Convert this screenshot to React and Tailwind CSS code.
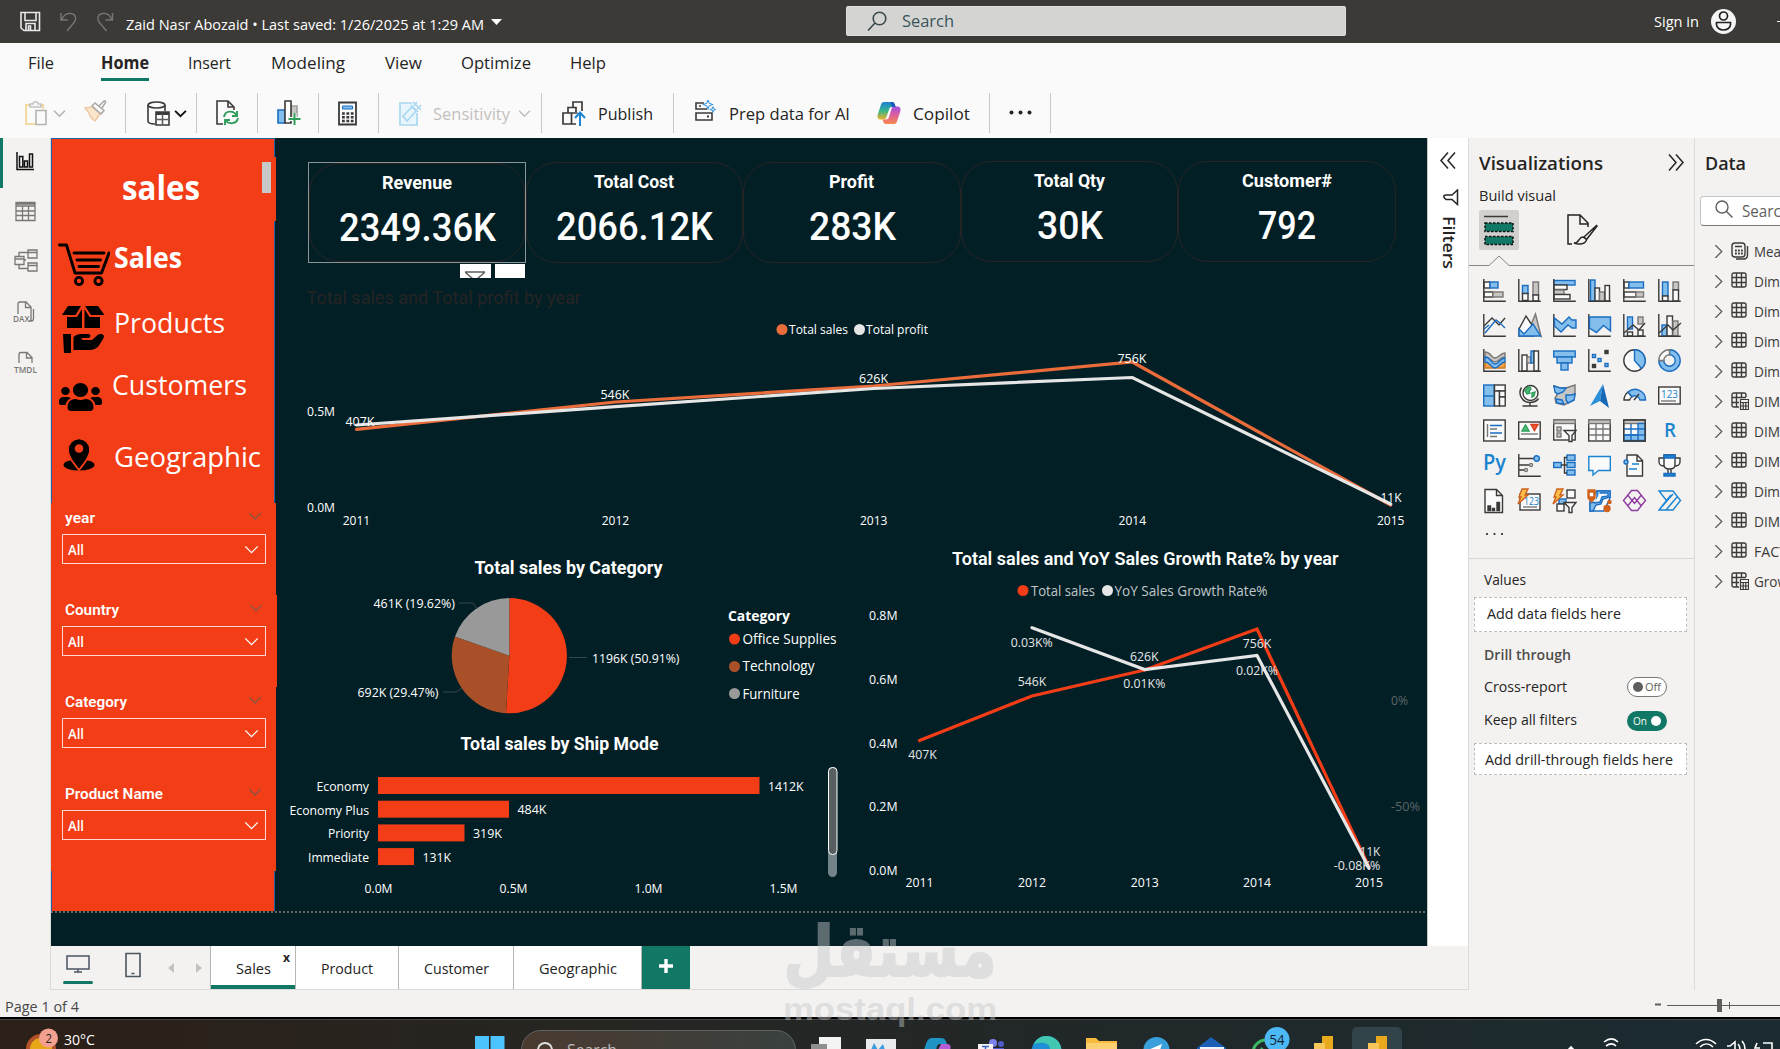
import React from 'react';
import { FaUsers } from 'react-icons/fa';

const K = '#3b3a39';
const B = '#1a6dc1';
const FILLS = {
  b: ['#83beec', B],
  g: ['#c8c6c4', '#797775'],
  w: ['#fafafa', K],
  k: [K, K],
};

// Text fitted to a width. cy is the middle of the capitals.
function T({ x, cy, w, size = 13, anchor = 'start', fill = '#fff', weight = 400, font = 'Open Sans', children }) {
  return (
    <text
      x={x}
      y={cy + size * 0.355}
      textAnchor={anchor}
      textLength={w}
      lengthAdjust="spacingAndGlyphs"
      fontSize={size}
      fontWeight={weight}
      fontFamily={`"${font}", sans-serif`}
      fill={fill}
    >
      {children}
    </text>
  );
}

// Single label sized to its own box, used in bars and panels
function Label({ w, h = 22, size = 15, weight = 400, fill = '#252423', font, className = '', children }) {
  return (
    <svg width={w} height={h} className={`block shrink-0 overflow-visible ${className}`}>
      <T x={0} cy={h / 2} w={w} size={size} weight={weight} fill={fill} font={font}>{children}</T>
    </svg>
  );
}

function Chevron({ size = 12, color = K, dir = 'down', sw = 1.5, className = '' }) {
  const d = { down: 'M1 3.5 6 8.5 11 3.5', right: 'M3 0 9 6 3 12' }[dir];
  return (
    <svg width={size} height={size} viewBox="0 0 12 12" className={`block shrink-0 ${className}`} fill="none" stroke={color} strokeWidth={sw}>
      <path d={d} />
    </svg>
  );
}

/* ---------- title bar ---------- */

function TitleBar() {
  return (
    <header className="flex h-[43px] shrink-0 items-center bg-[#3b3a37] pl-5">
      <svg width="95" height="22" viewBox="0 0 95 22" fill="none" className="shrink-0">
        <g stroke="#e8e8e8" strokeWidth="1.6">
          <path d="M1 1.5h18.5v18H4L1 17zM5 1.5v8h11v-8M6 19.500v-7h9v7M8.500 19v-4h2v4" />
        </g>
        <g stroke="#777673" strokeWidth="1.4">
          <path d="M41 2v7h7M41.500 9c2-5 6-7 9.500-6.500 4.500.5 6 5 3.500 8.500L47 20" />
          <path d="M92.500 2v7h-7M92 9c-2-5-6-7-9.500-6.500-4.500.5-6 5-3.500 8.500L86.500 20" />
        </g>
      </svg>
      <Label w={358} size={15} fill="#fff" className="ml-[11px] mt-[6px]">Zaid Nasr Abozaid • Last saved: 1/26/2025 at 1:29 AM</Label>
      <svg width="12" height="7" className="ml-[7px] mt-0.5 shrink-0"><path d="M0 0h11l-5.500 6z" fill="#fff" /></svg>
      <div className="-mt-px ml-[343px] flex h-[30px] w-[500px] shrink-0 items-center rounded-[2px] border border-[#dededc] bg-[#d4d4d2] pl-[20px]">
        <svg width="20" height="20" viewBox="0 0 20 20" fill="none" stroke="#3b4a4c" strokeWidth="1.600">
          <circle cx="12.500" cy="7.500" r="6.300" />
          <path d="M8 12 1 19.500" />
        </svg>
        <Label w={52} size={17} fill="#37555a" className="ml-[15px]">Search</Label>
      </div>
      <Label w={45} size={15} fill="#fff" className="ml-[308px]">Sign in</Label>
      <svg width="25" height="25" viewBox="0 0 25 25" className="ml-[12px] shrink-0">
        <circle cx="12.500" cy="12.500" r="12.500" fill="#f5f5f5" />
        <g fill="none" stroke="#222" strokeWidth="1.700">
          <circle cx="12.500" cy="7" r="4" />
          <path d="M5.500 13.500h14v2c0 3.500-3.500 5.500-7 5.500s-7-2-7-5.500z" />
        </g>
      </svg>
      <div className="ml-[41px] h-px w-3 shrink-0 bg-white" />
    </header>
  );
}

/* ---------- ribbon ---------- */

const ribbonTabs = [
  { label: 'File', w: 26, gap: 28 },
  { label: 'Home', w: 48, gap: 47, active: true },
  { label: 'Insert', w: 43, gap: 39 },
  { label: 'Modeling', w: 74, gap: 40 },
  { label: 'View', w: 37, gap: 40 },
  { label: 'Optimize', w: 70, gap: 39 },
  { label: 'Help', w: 36, gap: 39 },
];

function Sep({ className }) {
  return <div className={`h-10 w-px shrink-0 bg-[#c8c8c8] ${className}`} />;
}

function Ribbon() {
  return (
    <div className="flex h-[95px] shrink-0 flex-col bg-[#fafafa]">
      <div className="flex h-[45px] items-start pt-[9px]">
        {ribbonTabs.map((t) => (
          <div key={t.label} className="flex flex-col" style={{ marginLeft: t.gap }}>
            <Label w={t.w} size={17} weight={t.active ? 700 : 400}>{t.label}</Label>
            {t.active && <div className="mt-1 h-[3px] bg-[#117865]" />}
          </div>
        ))}
      </div>
      <div className="flex h-[50px] items-center">
        <svg width="22" height="25" viewBox="0 0 22 25" fill="none" className="ml-[25px] shrink-0" strokeWidth="1.600">
          <path d="M5 4H1v19h10M15 4h3v4" stroke="#f5d9a5" strokeWidth="2.200" />
          <path d="M5 6V3h3c0-3 5-3 5 0h3v3z" stroke="#c4c2c0" />
          <path d="M11 9.500h10v14H11z" stroke="#b5b3b1" fill="#fafafa" />
        </svg>
        <Chevron size={13} color="#b5b3b1" className="ml-[6px]" />
        <svg width="23" height="22" viewBox="0 0 23 22" fill="none" className="ml-[18px] shrink-0 -mt-1" strokeWidth="1.500">
          <path d="m1 8 7-1 8 7-5 7c-3-2-5-5-5-5l-1-3z" fill="#fbe6cc" stroke="#eec9a4" />
          <path d="m8 6 9 8M11 3l9 7.500-3 3.500-9-8zM15 6l5-5c1-.5 2 .5 1.500 1.500L18 8" stroke="#a9a7a5" fill="#fafafa" />
        </svg>
        <Sep className="ml-[18px]" />
        <svg width="23" height="25" viewBox="0 0 23 25" fill="none" className="ml-[21px] shrink-0" stroke={K} strokeWidth="1.600">
          <ellipse cx="9.500" cy="4" rx="8.500" ry="3" />
          <path d="M1 4v16c0 2 3 3 7 3M18 4v6" />
          <path d="M9 11h13v13H9z" fill="#fff" />
          <path d="M9 12.500h13" strokeWidth="3" />
          <path d="M9 18.500h13M15.500 13v11" stroke="#605e5c" />
        </svg>
        <Chevron size={13} color="#111" sw={1.700} className="ml-[4px]" />
        <Sep className="ml-[9px]" />
        <svg width="24" height="26" viewBox="0 0 24 26" fill="none" className="ml-[19px] shrink-0" strokeWidth="1.600">
          <path d="M7 24H1V1h11l6 6v3M12 1v6h6" stroke={K} />
          <path d="M8 17c1-7 10-7 13-1M21 11v5h-5M22 18c-1 6-9 7-13 2M9 25v-5h5" stroke="#2f9e5b" strokeWidth="1.900" />
        </svg>
        <Sep className="ml-[17px]" />
        <svg width="24" height="26" viewBox="0 0 24 26" fill="none" className="ml-[19px] shrink-0" strokeWidth="1.600">
          <path d="M1 10h7v13H1z" fill="#83beec" stroke={B} />
          <path d="M14 6h6v10h-6z" fill="#c8c6c4" stroke="#a19f9d" />
          <path d="M8 1h6v22H8z" fill="#fff" stroke={K} />
          <path d="M17.500 13v12M11.500 19h12" stroke="#fafafa" strokeWidth="4" />
          <path d="M17.500 13v12M11.500 19h12" stroke="#2f9e5b" strokeWidth="2" />
        </svg>
        <Sep className="ml-[17px]" />
        <svg width="19" height="25" viewBox="0 0 19 25" fill="none" className="ml-[19px] shrink-0">
          <path d="M1 1.500h17v22H1z" stroke={K} strokeWidth="1.800" />
          <path d="M4.500 5h10v3h-10z" fill="#83beec" stroke={B} />
          <path d="M4 12.500h12M4 16.300h12M4 20h12" stroke={K} strokeWidth="2.600" strokeDasharray="2.800 1.600" />
        </svg>
        <Sep className="ml-[21px]" />
        <svg width="23" height="25" viewBox="0 0 23 25" fill="none" className="ml-[20px] shrink-0" stroke="#a8d8f0" strokeWidth="1.700">
          <path d="M13 2H1v22h17V12" fill="#e9f5fc" />
          <path d="m4 15 9-9 4 4-9 10zM12 4l7 7M14 1l8 8M18 1l-3 4M22 4l-4 4" />
        </svg>
        <Label w={77} size={17} fill="#c3c1bf" className="ml-[11px] mt-px">Sensitivity</Label>
        <Chevron size={13} color="#c3c1bf" className="ml-[8px]" />
        <Sep className="ml-[10px]" />
        <svg width="24" height="25" viewBox="0 0 24 25" fill="none" className="ml-[20px] shrink-0" stroke={K} strokeWidth="1.700">
          <path d="M11 6V1h9v9M6 12V6.500h8V11M1 12h8.500v11H1zM9.500 12h6M10 23h4" />
          <path d="M18 25V12M13 17l5-5.500 5 5.500" stroke="#1a84d0" strokeWidth="2" />
        </svg>
        <Label w={55} size={17} className="ml-[12px] mt-px">Publish</Label>
        <Sep className="ml-5" />
        <svg width="21" height="22" viewBox="0 0 21 22" fill="none" className="ml-[21px] shrink-0 -mt-1" stroke={K} strokeWidth="1.600">
          <path d="M9 3H1v6h11M1 13h16v7H1zM17 13v7M4 6h2" />
          <path d="M12 16.500h2" strokeWidth="2" />
          <path d="m13 0 1.300 3.200L17.500 4.500l-3.200 1.300L13 9l-1.300-3.200L8.500 4.500l3.200-1.300zM18 7l.8 1.700 1.700.8-1.700.8L18 12l-.8-1.700-1.700-.8 1.700-.8z" stroke="#3a97dc" strokeWidth="1.100" />
        </svg>
        <Label w={121} size={17} className="ml-[13px] mt-px">Prep data for AI</Label>
        <Copilot className="ml-[27px] shrink-0" />
        <Label w={57} size={17} className="ml-[12px] mt-px">Copilot</Label>
        <Sep className="ml-[19px]" />
        <svg width="23" height="5" className="ml-[19px] shrink-0 -mt-0.5" fill="#252423"><circle cx="2.500" cy="2.500" r="2" /><circle cx="11.500" cy="2.500" r="2" /><circle cx="20.500" cy="2.500" r="2" /></svg>
        <Sep className="ml-[18px]" />
      </div>
    </div>
  );
}

function Copilot({ className = '', size = 24 }) {
  return (
    <svg width={size} height={size} viewBox="0 0 24 24" className={className}>
      <defs>
        <linearGradient id="cpA" x1="0" y1="0" x2="0" y2="1">
          <stop offset="0" stopColor="#1d7fd6" /><stop offset=".5" stopColor="#35b58a" /><stop offset="1" stopColor="#f0b429" />
        </linearGradient>
        <linearGradient id="cpB" x1="0" y1="0" x2="0" y2="1">
          <stop offset="0" stopColor="#a14fe0" /><stop offset=".5" stopColor="#e0609a" /><stop offset="1" stopColor="#f7894a" />
        </linearGradient>
      </defs>
      <path d="M7 1h8c2 0 2.500 1.500 3 3l.6 2H15c-2 0-2.600 1-3 2.500L9.500 16c-.6 2-1.500 2.500-3 2.500H3.500C1 18.500 0 16.500.6 14L4 3.500C4.500 2 5.500 1 7 1z" fill="url(#cpA)" />
      <path d="M17 23H9c-2 0-2.500-1.500-3-3l-.4-1.500H9c2 0 2.600-1 3-2.500L14.500 8c.6-2 1.500-2.500 3-2.500h3c2.500 0 3.500 2 2.900 4.500L20 20.500C19.500 22 18.500 23 17 23z" fill="url(#cpB)" />
      <path d="M13.500 1H15c2 0 2.500 1.500 3 3l.6 1.800H15z" fill="#1556b8" />
    </svg>
  );
}

/* ---------- left rail ---------- */

function LeftRail() {
  return (
    <nav className="flex w-[51px] shrink-0 flex-col border-r border-[#dcdad8] bg-[#f3f2f1]">
      <div className="flex h-[50px] items-center border-l-[3px] border-[#117865] pl-[13px]">
        <svg width="19" height="19" viewBox="0 0 19 19" fill="none" stroke="#111" strokeWidth="1.500" className="-mt-1">
          <path d="M1 0v17.500h17M3.500 4.500h3.300V15H3.500zM8.500 9h3V15h-3zM13.500 2h3v13h-3z" />
        </svg>
      </div>
      <div className="flex h-[46px] items-center pl-[15px]">
        <svg width="21" height="21" viewBox="0 0 21 21" fill="none" stroke="#797775" strokeWidth="1.300">
          <path d="M1 1.500h19v18H1zM1 5h19M1 3h19M1 10h19M1 14.500h19M7.500 5v14.500M13.500 5v14.500" />
        </svg>
      </div>
      <div className="flex h-[54px] items-center pl-[14px]">
        <svg width="24" height="24" viewBox="0 0 24 24" fill="none" stroke="#797775" strokeWidth="1.300">
          <path d="M1 7.500h9v8H1zM1 10h9M14 1h9v8h-9zM14 3.500h9M14 14h9v8h-9zM14 16.500h9M5 7.500V3.500h9M5 15.500v4h9M10 11h2" />
        </svg>
      </div>
      <div className="flex h-[50px] items-center pl-[13px]">
        <svg width="24" height="24" viewBox="0 0 24 24" fill="none" stroke="#797775" strokeWidth="1.300" className="overflow-visible">
          <path d="M5 13V3c0-1.500.5-2 2-2h6l5 5v14h-2M12.500 1v5.500H18M20.500 8v9c0 2-1 3-2 3" />
          <text x="0" y="20.500" fontSize="8.500" textLength="16.500" lengthAdjust="spacingAndGlyphs" fontFamily='"Open Sans", sans-serif' fontWeight="600" fill="#797775" stroke="none">DAX</text>
        </svg>
      </div>
      <div className="flex h-[50px] items-center pl-[13px]">
        <svg width="26" height="24" viewBox="0 0 26 24" fill="none" stroke="#797775" strokeWidth="1.300" className="overflow-visible">
          <path d="M6 12V3.500c0-1.500.5-2 2-2h6l5 5V12M13.500 1.500V7H19" />
          <text x="1" y="22" fontSize="9.500" textLength="23" lengthAdjust="spacingAndGlyphs" fontFamily='"Open Sans", sans-serif' fontWeight="600" fill="#797775" stroke="none">TMDL</text>
        </svg>
      </div>
    </nav>
  );
}

/* ---------- report canvas ---------- */

const slicers = [
  { label: 'year', w: 30 },
  { label: 'Country', w: 54 },
  { label: 'Category', w: 62 },
  { label: 'Product Name', w: 98 },
];

function CartIcon() {
  return (
    <svg width="52" height="43" viewBox="0 0 52 43" fill="none" stroke="#000" strokeWidth="2.900" strokeLinecap="round" strokeLinejoin="round">
      <path d="M1.500 2h7L17 30h26.500L51 10" />
      <path d="M16 10h30M19 17h23.500M21 23.500h19.500" />
      <circle cx="21" cy="38" r="3.600" /><circle cx="40.500" cy="38" r="3.600" />
    </svg>
  );
}

function BoxHandIcon() {
  return (
    <svg width="43" height="48" viewBox="0 0 43 48" fill="#000">
      <path d="M6 0h13l-5.500 9H0zM23 0h13l6.500 9H29zM20 3v19H5V11h10zM22.500 3l5 8H38v11H22.500z" />
      <path d="M1 28h8v19H2z M11.500 31c3-3 6-3 9-3h6c3 0 2 4 0 4h-7c0 2 1 2 3 2h7c3-1 5-6 9-6 3 0 4 2 3 4-4 7-6 12-14 12H11.500z" />
    </svg>
  );
}

const pages = [
  { label: 'Sales', icon: <CartIcon />, w: 68, bold: true },
  { label: 'Products', icon: <BoxHandIcon />, w: 111 },
  { label: 'Customers', icon: <FaUsers preserveAspectRatio="none" className="h-[32px] w-[43px]" />, w: 135 },
  {
    label: 'Geographic',
    icon: (
      <svg width="32" height="33" viewBox="0 0 32 33">
        <ellipse cx="16" cy="27" rx="15.500" ry="5.500" />
        <path d="M16 32C8 22 5 17 5 11.500a11 11 0 0 1 22 0C27 17 24 22 16 32z" stroke="#f23d17" strokeWidth="2" />
        <path d="M16 30C8 21 6 16 6 11.500a10 10 0 0 1 20 0C26 16 24 21 16 30z" />
        <circle cx="16" cy="10.500" r="4.300" fill="#f23d17" />
      </svg>
    ),
    w: 147,
  },
];

const pageRow = [
  'mt-[31px] h-[60px] pl-[6px]',
  'mt-[4px] h-[64px] pl-[10px]',
  'mt-[6px] h-[58px] pl-[7px]',
  'h-[57px] pl-[11px]',
];
const pageText = [
  'ml-[4px] -mt-[13px]',
  'ml-[9px] -mt-[15px]',
  'ml-[10px] -mt-[24px]',
  'ml-[19px] mt-[5px]',
];

function Sidebar() {
  return (
    <aside className="flex h-[773px] w-[224px] shrink-0 flex-col border-x border-t border-[#1f62a8] bg-[#f23d17]">
      <div className="-mr-[2px] mt-[18px] flex h-[64px] shrink-0 items-start bg-[#f23d17] pt-[5px]">
        <Label w={78} h={44} size={34} weight={700} fill="#fff" className="ml-[70px] mt-[4px]">sales</Label>
        <div className="ml-[62px] h-[31px] w-[9px] bg-[#c8c8c8]" />
      </div>
      <div className="-mt-[18px] flex h-[300px] shrink-0 flex-col">
        {pages.map((p, i) => (
          <div key={p.label} className={`flex shrink-0 items-center ${pageRow[i]}`}>
            {p.icon}
            <Label w={p.w} h={36} size={28} weight={p.bold ? 700 : 400} fill="#fff" className={pageText[i]}>{p.label}</Label>
          </div>
        ))}
      </div>
      <div className="-mx-px flex flex-col">
        {slicers.map((s, i) => (
          <div key={s.label} className={`flex h-[92px] flex-col bg-[#f23d17] pl-[11px] ${i === 1 ? '-mr-[2px]' : '-mr-px'}`}>
            <div className="flex h-[31px] items-center justify-between pl-[3px] pr-[14px]">
              <Label w={s.w} size={15} weight={600} fill="#fff" font="Roboto" className="-mt-[2px]">{s.label}</Label>
              <Chevron size={14} color="#8a5540" sw={1.200} className="-mt-[5px]" />
            </div>
            <div className="flex h-[30px] w-[204px] items-center justify-between border border-[#ffd9cf] pl-[5px] pr-[6px]">
              <Label w={16} size={14} weight={600} fill="#fff" className="mt-px">All</Label>
              <Chevron size={15} color="#fff" sw={1.100} />
            </div>
          </div>
        ))}
      </div>
    </aside>
  );
}

const cards = [
  { title: 'Revenue', tw: 70, value: '2349.36K', vw: 157, selected: true },
  { title: 'Total Cost', tw: 80, value: '2066.12K', vw: 157 },
  { title: 'Profit', tw: 45, value: '283K', vw: 87 },
  { title: 'Total Qty', tw: 71, value: '30K', vw: 66, up: true },
  { title: 'Customer#', tw: 90, value: '792', vw: 58, up: true },
];

function Cards() {
  return (
    <div className="flex h-[139px] pl-[32px] pt-[24px]">
      {cards.map((c) => (
        <div key={c.title} className={`relative h-[101px] w-[217.500px] shrink-0 ${c.up ? '-mt-px' : ''} ${c.selected ? 'border border-[#8c9496]' : ''}`}>
          <div className="flex h-full flex-col items-center rounded-[30px] border border-[#252423] pt-[8px]">
            <Label w={c.tw} h={22} size={18} weight={700} fill="#fff" font="Roboto">{c.title}</Label>
            <Label w={c.vw} h={40} size={38} weight={500} fill="#fff" font="Roboto" className="ml-px mt-[13px]">{c.value}</Label>
          </div>
          {c.selected && (
            <div className="absolute right-0 top-[101px] flex gap-1">
              <div className="h-[14px] w-[31px] overflow-hidden bg-white pl-[5px] pt-[7px]">
                <svg width="20" height="7" fill="none" stroke="#605e5c" strokeWidth="1.400"><path d="M0 1h20L12 8H8L0 1" /></svg>
              </div>
              <div className="h-[14px] w-[30px] bg-white" />
            </div>
          )}
        </div>
      ))}
    </div>
  );
}

const yearX = [356.5, 615.5, 873.7, 1132.3, 1390.7];
const years = ['2011', '2012', '2013', '2014', '2015'];

function toPoints(xs, ys) {
  return xs.map((x, i) => `${x},${ys[i]}`).join(' ');
}

function LineChart() {
  const labels = [['407K', 360, 421.7, 29], ['546K', 615, 394, 29], ['626K', 873.6, 378.7, 29], ['756K', 1132, 358.7, 29], ['11K', 1391, 497.5, 21]];
  return (
    <svg width="1152" height="266" viewBox="276 277 1152 266" className="block" fill="none">
      <T x={306.500} cy={297.700} w={274.500} size={17.500} fill="#252423" font="Roboto">Total sales and Total profit by year</T>
      <circle cx="782" cy="329.500" r="5.500" fill="#ea6c3a" />
      <T x={789} cy={329.500} w={59}>Total sales</T>
      <circle cx="859.500" cy="329.500" r="5.500" fill="#e6e6e6" />
      <T x={866} cy={329.500} w={62}>Total profit</T>
      <T x={307} cy={411.700} w={28}>0.5M</T>
      <T x={307} cy={507.500} w={28}>0.0M</T>
      {years.map((y, i) => <T key={y} x={yearX[i]} cy={520.700} w={27.500} anchor="middle">{y}</T>)}
      <polyline points={toPoints(yearX, [429.3, 402, 386, 362, 505])} stroke="#ea6c3a" strokeWidth="3.200" strokeLinecap="round" />
      <polyline points={toPoints(yearX, [425, 406.7, 388.5, 377.5, 504])} stroke="#e6e6e6" strokeWidth="3.200" strokeLinecap="round" />
      {labels.map(([t, x, cy, w]) => <T key={t} x={x} cy={cy} w={w} anchor="middle">{t}</T>)}
    </svg>
  );
}

const PIE = { cx: 509.3, cy: 655.7, r: 57.6 };

function slice(from, to) {
  const pt = (f) => {
    const a = f * 2 * Math.PI;
    return `${PIE.cx + PIE.r * Math.sin(a)} ${PIE.cy - PIE.r * Math.cos(a)}`;
  };
  return `M${PIE.cx} ${PIE.cy}L${pt(from)}A${PIE.r} ${PIE.r} 0 ${to - from > 0.5 ? 1 : 0} 1 ${pt(to)}Z`;
}

function PieChart() {
  return (
    <svg width="580" height="186" viewBox="276 543 580 186" className="block" fill="none">
      <T x={474.500} cy={568} w={188} size={18} weight={700} font="Roboto">Total sales by Category</T>
      <path d={slice(0, 0.5091)} fill="#f23d17" />
      <path d={slice(0.5091, 0.8038)} fill="#a95028" />
      <path d={slice(0.8038, 1)} fill="#989998" />
      <path d="M459 603h14l4 6M443 692h13l6-4M569 657.500h18" stroke="#34474c" />
      <T x={373.500} cy={603.500} w={81.500}>461K (19.62%)</T>
      <T x={357.500} cy={692.300} w={81}>692K (29.47%)</T>
      <T x={592} cy={658.300} w={87.500}>1196K (50.91%)</T>
      <T x={728} cy={616.300} w={62} size={14} weight={700}>Category</T>
      <circle cx="734.500" cy="639" r="5.500" fill="#f23d17" />
      <T x={742.500} cy={639.500} w={94} size={14}>Office Supplies</T>
      <circle cx="734.500" cy="666.500" r="5.500" fill="#a95028" />
      <T x={742.500} cy={666.500} w={72} size={14}>Technology</T>
      <circle cx="734.500" cy="693.500" r="5.500" fill="#989998" />
      <T x={742.500} cy={694.500} w={57} size={14}>Furniture</T>
    </svg>
  );
}

const shipModes = [
  { name: 'Economy', nw: 52.5, value: '1412K', vw: 35.5, bar: 381.5 },
  { name: 'Economy Plus', nw: 79.5, value: '484K', vw: 29, bar: 131 },
  { name: 'Priority', nw: 41, value: '319K', vw: 29, bar: 86.5 },
  { name: 'Immediate', nw: 61, value: '131K', vw: 28.5, bar: 36 },
];

function BarChart() {
  return (
    <svg width="580" height="182" viewBox="276 729 580 182" className="block" fill="none">
      <T x={460.500} cy={744} w={198} size={18} weight={700} font="Roboto">Total sales by Ship Mode</T>
      {shipModes.map((s, i) => {
        const y = 777 + i * 23.7;
        return (
          <g key={s.name}>
            <T x={369} cy={y + 9.300} w={s.nw} anchor="end">{s.name}</T>
            <rect x="378" y={y} width={s.bar} height="17" fill="#f23d17" />
            <T x={378 + s.bar + 8.500} cy={y + 9} w={s.vw}>{s.value}</T>
          </g>
        );
      })}
      {['0.0M', '0.5M', '1.0M', '1.5M'].map((t, i) => (
        <T key={t} x={378.500 + i * 135} cy={888.500} w={28} anchor="middle">{t}</T>
      ))}
      <rect x="828" y="767" width="9" height="110" rx="4.500" fill="#72838a" />
      <rect x="828.500" y="767.500" width="8.500" height="87" rx="4" fill="#575f61" stroke="#fff" />
    </svg>
  );
}

const comboX = [919.5, 1032, 1144.7, 1257, 1369];

function ComboChart() {
  const labels = [
    ['407K', 922.5, 754.2, 28.5], ['546K', 1032, 681.5, 28.5], ['626K', 1144.3, 656.5, 28.5], ['756K', 1257, 643.5, 28.5], ['11K', 1370, 851.5, 20.5],
    ['0.03K%', 1031.7, 642.3, 42], ['0.01K%', 1144.3, 683.3, 42], ['0.02K%', 1257, 670.3, 42], ['-0.08K%', 1357, 865.3, 46.5],
  ];
  return (
    <svg width="572" height="368" viewBox="856 543 572 368" className="block" fill="none">
      <T x={952} cy={559} w={386.500} size={17.500} weight={600} font="Roboto">Total sales and YoY Sales Growth Rate% by year</T>
      <circle cx="1023" cy="590.500" r="5.500" fill="#f23d17" />
      <T x={1031} cy={591.300} w={64} fill="#c0c6c8" size={14}>Total sales</T>
      <circle cx="1107.500" cy="590.500" r="5.500" fill="#e6e6e6" />
      <T x={1114.500} cy={591.300} w={153} fill="#c0c6c8" size={14}>YoY Sales Growth Rate%</T>
      {['0.8M', '0.6M', '0.4M', '0.2M', '0.0M'].map((t, i) => (
        <T key={t} x={869} cy={615.500 + i * 63.700} w={28.500}>{t}</T>
      ))}
      {years.map((y, i) => <T key={y} x={comboX[i]} cy={882.300} w={28} anchor="middle">{y}</T>)}
      <T x={1391} cy={700.500} w={17} fill="#5d6668">0%</T>
      <T x={1391} cy={806.500} w={29} fill="#5d6668">-50%</T>
      <polyline points={toPoints(comboX, [740.5, 696, 670, 629, 867])} stroke="#f23d17" strokeWidth="3.200" strokeLinecap="round" />
      <polyline points={toPoints(comboX.slice(1), [627.7, 669.5, 655.5, 868])} stroke="#e6e6e6" strokeWidth="3.200" strokeLinecap="round" />
      {labels.map(([t, x, cy, w]) => <T key={t} x={x} cy={cy} w={w} anchor="middle" fill="#e6e6e6">{t}</T>)}
    </svg>
  );
}

function ReportCanvas() {
  return (
    <div className="h-[808px] w-[1376px] shrink-0 bg-[#031f26]">
      <div className="flex h-[773px]">
        <Sidebar />
        <div className="ml-px flex w-[1151px] flex-col overflow-hidden">
          <Cards />
          <LineChart />
          <div className="flex">
            <div className="w-[580px] shrink-0">
              <PieChart />
              <BarChart />
            </div>
            <div className="shrink-0">
              <ComboChart />
            </div>
          </div>
        </div>
      </div>
      <svg width="1376" height="2" className="block"><path d="M0 1h1376" stroke="#6b6866" strokeWidth="2" strokeDasharray="2 2" /></svg>
    </div>
  );
}

/* ---------- page tabs ---------- */

const tabs = [
  { label: 'Sales', w: 35, width: 85, active: true },
  { label: 'Product', w: 52, width: 103 },
  { label: 'Customer', w: 65, width: 115 },
  { label: 'Geographic', w: 78, width: 128 },
];

function PageTabs() {
  return (
    <div className="flex h-[44px] shrink-0 border-b border-[#dcdad8] bg-[#f3f2f1]">
      <div className="ml-[12px] flex w-[30px] flex-col items-center pt-[9px]">
        <svg width="24" height="18" viewBox="0 0 24 18" fill="none" stroke="#4a5560" strokeWidth="1.500"><path d="M1 1h22v13H1zM12 14v3M8 17h8" /></svg>
        <div className="mt-2 h-[3px] w-full rounded-sm bg-[#117865]" />
      </div>
      <svg width="16" height="26" viewBox="0 0 16 26" fill="none" stroke="#4a5560" strokeWidth="1.600" className="ml-[32px] mt-[6px]"><path d="M1 1.500h14v23H1zM6.500 21.500h3" /></svg>
      <svg width="34" height="10" className="ml-[27px] mt-[17px]"><path d="M6 0v10L0 5zM28 0v10l6-5z" fill="#c4c2c0" /></svg>
      <div className="ml-[8px] flex">
        {tabs.map((t) => (
          <div key={t.label} className="relative flex items-center justify-center border-l border-[#b8b6b4] bg-white" style={{ width: t.width }}>
            <Label w={t.w} size={14.500} weight={t.active ? 500 : 400} className="mt-[2px]">{t.label}</Label>
            {t.active && <div className="absolute inset-x-0 bottom-0 h-[4px] bg-[#117865]" />}
            {t.active && <Label w={7} size={13} weight={700} className="absolute right-[5px] top-0">x</Label>}
          </div>
        ))}
        <div className="flex w-[49px] items-center justify-center border-l border-[#b8b6b4] bg-[#117865]">
          <svg width="14" height="14" className="-mt-1"><path d="M7 0v14M0 7h14" stroke="#fff" strokeWidth="3.400" /></svg>
        </div>
      </div>
    </div>
  );
}

/* ---------- filters / visualizations / data ---------- */

function FiltersPane() {
  return (
    <div className="flex h-[808px] w-[42px] shrink-0 flex-col items-center border-l border-[#c8c6c4] bg-white pt-[14px]">
      <svg width="16" height="17" viewBox="0 0 16 17" fill="none" stroke="#252423" strokeWidth="1.500" className="ml-[-2px]"><path d="M8 .5 1 8.500l7 8M15 .5 8 8.500l7 8" /></svg>
      <svg width="16" height="17" viewBox="0 0 16 17" fill="none" stroke="#252423" strokeWidth="1.500" className="ml-[5px] mt-[20px]"><path d="M14.500 1v14.500L9 10.500H3L1 8.500v-2l2-.5h6z" /></svg>
      <svg width="20" height="54" className="mt-[10px] overflow-visible">
        <g transform="translate(10 0) rotate(90)">
          <T x={0} cy={0} w={53} size={17} weight={600} fill="#252423">Filters</T>
        </g>
      </svg>
    </div>
  );
}

const AX = ['M.8 0v22.200h22', K, 'none'];
const F123 = (x, y, w, size) => ({ t: '123', x, y, w, size });

// r: rectangles [x, y, w, h, fill], p: paths [d, stroke, fill], t: texts
const visuals = [
  { p: [AX], r: [[1, 3, 6, 6, 'w'], [7, 3, 8, 6, 'b'], [1, 13, 9, 5, 'w'], [10, 13, 10, 5, 'g']] },
  { p: [AX], r: [[4.5, 6.500, 5.500, 8, 'b'], [4.5, 14.500, 5.500, 7, 'w'], [15, 3, 5.500, 13, 'g'], [15, 16, 5.500, 6, 'w']] },
  { p: [AX], r: [[1, 1.500, 21, 4.500, 'b'], [1, 6, 13, 4.500, 'w'], [1, 11, 10, 4.500, 'g'], [1, 15.500, 16, 4.500, 'w']] },
  { p: [AX], r: [[2.5, 1, 4.500, 21, 'b'], [7, 9, 4.500, 13, 'w'], [11.5, 13, 5, 9, 'g'], [17, 6.500, 4.500, 15.500, 'w']] },
  { p: [AX], r: [[1, 3, 5, 6, 'w'], [6, 3, 14.500, 6, 'b'], [1, 13, 12, 5, 'w'], [13, 13, 7.500, 5, 'g']] },
  { p: [AX], r: [[4.5, 3, 5.500, 14, 'b'], [4.5, 17, 5.500, 5, 'w'], [15, 3, 5.500, 8, 'g'], [15, 11, 5.500, 11, 'w']] },

  { p: [AX, ['M1 12 9 4l7 7 6-7', K, 'none'], ['M2 19 13 6l4 3 5 5M1 15l5-4', B, 'none']] },
  { p: [['M12 13 17.500 0 23 22z', '#797775', '#c8c6c4'], ['M1 15 8 2l8 12v8H1z', K, '#fafafa'], ['M1 22v-7l5 5 9-10 7.500 12z', B, '#83beec']] },
  { p: [AX, ['M1.500 4 9 10l7-7 3 3h4v8h-4l-4-3-7 7-6.500-6z', B, '#83beec']] },
  { p: [AX, ['M1.500 3H22.500v14l-7-5.500-7 7-7-4.500z', B, '#83beec']] },
  { p: [AX, ['M1 19 10 11l6 5 6-7', K, 'none']], r: [[4.5, 3, 5, 12, 'b'], [15, 3, 5, 7, 'g'], [4.5, 18, 5, 4, 'w'], [15, 16, 5, 6, 'w']] },
  { p: [AX, ['M1 19 10 11l5 5 8-7', K, 'none']], r: [[4, 11, 5, 11, 'b'], [9, 2, 5.500, 20, 'w'], [15, 7, 5, 15, 'g']] },

  { p: [AX, ['M2 3c6 0 6 6 10 6s5-5 10-5v4c-5 0-6 5-10 5S7 8 2 8z', '#797775', '#c8c6c4'], ['M2 13c5 0 8 5 10 5s5-5 10-5v6H2z', '#d07a1c', '#f2a34b'], ['M2 8c6 0 6 7 10 7s5-6 10-6v4c-5 0-6 6-10 6S7 13 2 13z', B, '#83beec']] },
  { p: [AX], r: [[4, 6, 5, 16, 'w'], [9, 8, 4, 6, 'g'], [13, 2, 3, 12, 'b'], [16, 2, 4.500, 20, 'w']] },
  { r: [[0.7, 2, 21.500, 6, 'b'], [4, 8, 15, 6, 'b'], [8, 14, 7, 7, 'b']] },
  { p: [AX], r: [[17, 1.500, 3, 3, 'k'], [4.500, 5.500, 3, 3, 'b'], [10, 9.500, 3, 3, 'b'], [17, 14.500, 3, 3, 'b'], [4.500, 15.500, 3, 3, 'k']] },
  { p: [['M.8 11.500a10.700 10.700 0 1 0 21.400 0a10.700 10.700 0 1 0-21.400 0', K, '#fafafa'], ['M11.500.8v10.700l7 8A10.700 10.700 0 0 0 11.500.8z', B, '#83beec']] },
  { p: [['M11.500.8a10.700 10.700 0 1 1-10.700 10.700h5a5.700 5.700 0 1 0 5.700-5.700z', B, '#83beec'], ['M11.500.8v5a5.700 5.700 0 0 0-5.700 5.700h-5A10.700 10.700 0 0 1 11.500.8z', '#797775', '#fafafa']] },

  { r: [[0.7, 1, 10.500, 21, 'b'], [11.500, 1, 10.700, 6, 'w'], [11.500, 7, 5, 15, 'w'], [16.500, 7, 5.700, 6, 'w'], [16.500, 13, 5.700, 9, 'w']], p: [['M.7 12h10.500', B, 'none']] },
  { p: [['M3.500 3.500C0 9 3 18 11.500 18.500c4 0 7-1 9-4M12 18.500v3M4.500 22h15', K, 'none'], ['M5 9a7.500 7.500 0 1 0 15 0a7.500 7.500 0 1 0-15 0', K, '#fafafa'], ['M9 4l3-1 1 2-2 2 1 2-3 1-2-3zM14 9l3-1-1 4-2 1z', '#2f9e5b', '#4fc07b']] },
  { p: [['M1 2l6 2h6l9-3v9l-1 6-10 5-8-2-1-5 2-3z', '#797775', '#c8c6c4'], ['M1 2l6 2h6l-3 4-5 2-3-2zM13 11h5l4-1-1 6-6 3-2-3z', B, '#83beec'], ['M3 15l6 1 2 4-7-1z', B, '#83beec']] },
  { p: [['M15 0 2 22l10-5z', 'none', '#2a8fd8'], ['M15 0l6 24-9-7z', 'none', '#1667b5']] },
  { p: [['M1 16a10.500 10.500 0 0 1 4-8l4 5a5 5 0 0 0-2.500 3z', K, '#fafafa'], ['M5 8a10.500 10.500 0 0 1 17.500 8H17a5.500 5.500 0 0 0-8-3.500z', B, '#83beec'], ['M11 16l5-6', K, 'none']] },
  { r: [[0.7, 3, 21.500, 17, 'w']], p: [['M3 17h15', '#797775', 'none']], t: [F123(3, 13.500, 17, 11)] },

  { r: [[0.7, 1, 21.500, 21, 'w']], p: [['M4.500 5v13', '#797775', 'none'], ['M7 6.500h12M7 14h12', B, 'none'], ['M7 10h7M7 17.500h7', '#797775', 'none']] },
  { r: [[0.7, 3, 21.500, 17, 'w']], p: [['M4 12l3.500-6 3.500 6z', '#2f9e5b', '#4fc07b'], ['M13 5.500h7l-3.500 6z', '#d8401c', '#f2553a'], ['M3 15h17', '#797775', 'none']] },
  { r: [[0.7, 1, 21.500, 20, 'w'], [0.7, 1, 21.500, 3.500, 'g'], [4, 8, 4, 4, 'g'], [4, 14, 4, 4, 'g']], p: [['M11 11.500h12l-4 5v6h-3v-6z', K, '#fafafa']] },
  { r: [[0.7, 1, 21.500, 21, 'w'], [0.7, 1, 21.500, 3.500, 'g']], p: [['M1 10h21M1 16h21M8 5v17M15 5v17', '#797775', 'none']] },
  { r: [[0.7, 1, 21.500, 21, 'w'], [0.7, 1, 21.500, 3.500, 'g'], [15, 4.500, 7, 17, 'b'], [1, 16, 21, 5.500, 'b']], p: [['M1 10h21M8 5v17M15 16v6M1 16h14', '#1a6dc1', 'none'], ['M.7 1h21.500v21H.7z', K, 'none']] },
  { t: [{ t: 'R', x: 6, y: 18, w: 12, size: 20, bold: true }] },

  { t: [{ t: 'Py', x: 0, y: 16, w: 23, size: 21, bold: true }] },
  { p: [AX, ['M1 4.500h16M1 11h11M1 16h6', K, 'none'], ['M16 4.500a2.700 2.700 0 1 0 5.400 0a2.700 2.700 0 1 0-5.400 0', B, '#83beec'], ['M11.500 11a1.500 1.500 0 1 0 3 0a1.500 1.500 0 1 0-3 0M6.500 16a1.500 1.500 0 1 0 3 0a1.500 1.500 0 1 0-3 0', '#797775', '#fafafa']] },
  { p: [['M8 11h6M14 3.500h-2.500v15.500H14M14 11h-2.500', K, 'none']], r: [[0.7, 8.500, 7.500, 5, 'b'], [14, 1, 8, 5.500, 'b'], [14, 8.500, 8, 5, 'b'], [14, 16, 8, 5, 'b']] },
  { p: [['M.8 2.500h21.500v14H10.500L5 21v-4.500H.8z', '#1a84d0', '#fafafa']] },
  { p: [['M4 6V1h10l5.500 5.500V22H4V10M14 1v6h5.500', K, '#fafafa'], ['M1 8a2 2 0 1 0 4 0a2 2 0 1 0-4 0', B, '#83beec'], ['M9 10h7M6 15h8', '#1a84d0', 'none']] },
  { p: [['M6 1h11v10c0 3-3 4-5.500 4S6 14 6 11zM6 4H1v4c0 3 3 4 5 4M17 4h5v4c0 3-3 4-5 4M10 15v5M13 15v5', K, '#fafafa'], ['M6 1h11v3H6zM6 19.500h11V22H6z', B, '#1a84d0']] },

  { p: [['M2 .500h11.500l6 6V23.500H2zM13.500.5v6h6', K, '#fafafa'], ['M5 17h2.500v4.500H5zM9.500 19.500h2v2h-2zM14 13.500h2.500v8H14z', K, K]] },
  { r: [[2, 5, 20, 16, 'w']], p: [['M5 18h14', '#797775', 'none'], ['M4 0h6L7 6h3L0 15l3-7H1z', '#d0621c', '#f8c04a']], t: [F123(6, 15.500, 15, 10.500)] },
  { r: [[14, 1, 8, 8, 'w'], [6, 10, 7, 5, 'b'], [4, 15, 7, 7, 'w']], p: [['M11 13.500h12l-4 5v5h-3v-5z', K, '#fafafa'], ['M4 0h6L7 6h3L0 15l3-7H1z', '#d0621c', '#f8c04a']] },
  { p: [['M9 2h13v7L16 22H2V12z', B, '#fafafa'], ['M9 2h13v6l-7 2-2 5-5 1-3 6H2v-8l6-1 1-5z', B, '#83beec'], ['M12 4h8v3l-6 1-2 5-6 1', B, '#fafafa'], ['M0 1h7v8l-3.500 4L0 9z', '#d0621c', '#d0621c'], ['M16 19.500a3 3 0 1 0 6 0a3 3 0 1 0-6 0M20 13a1.500 1.500 0 1 0 3 0a1.500 1.500 0 1 0-3 0', '#d0621c', '#d0621c'], ['M2.500 4.500h2v2h-2z', '#fff', '#fff']] },
  { p: [['M8.500 1.500h6l8 10-8 10h-6l-8-10zM5 6.500l6.500 8L18 6.500M5 16.500l6.500-8 6.500 8', '#8e3aa0', 'none']] },
  { p: [['M1 2h14l7.500 9.500L15 21H1l7.500-9.500zM1 21 15 5M8 21 19 8M8.500 11.500 13 6', '#1a84d0', 'none']] },
];

function VisIcon({ icon }) {
  return (
    <svg width="23" height="23" viewBox="0 0 23 23" className="block overflow-visible" strokeWidth="1.400">
      {(icon.r || []).map(([x, y, w, h, f], i) => (
        <rect key={i} x={x} y={y} width={w} height={h} fill={FILLS[f][0]} stroke={FILLS[f][1]} />
      ))}
      {(icon.p || []).map(([d, s, f], i) => <path key={i} d={d} stroke={s} fill={f} />)}
      {(icon.t || []).map((t) => (
        <text key={t.t} x={t.x} y={t.y} textLength={t.w} lengthAdjust="spacingAndGlyphs" fontSize={t.size} fontWeight={t.bold ? 600 : 400} fontFamily='"Open Sans", sans-serif' fill="#1a84d0">{t.t}</text>
      ))}
    </svg>
  );
}

function VisualizationsPane() {
  return (
    <div className="-ml-px flex w-[227px] shrink-0 flex-col border-x border-[#dcdad8] bg-[#f3f2f1]">
      <div className="flex h-[46px] items-center justify-between pl-[10px] pr-[10px] pt-[3px]">
        <Label w={124} size={18.500} weight={600}>Visualizations</Label>
        <svg width="16" height="17" viewBox="0 0 16 17" fill="none" stroke="#252423" strokeWidth="1.500"><path d="m1 .5 7 8-7 8M8 .5l7 8-7 8" /></svg>
      </div>
      <Label w={77} size={15} weight={500} className="ml-[10px] mt-px">Build visual</Label>
      <div className="mt-[3px] flex h-[40px] pl-[10px]">
        <div className="flex h-10 w-10 items-center justify-center rounded-[2px] bg-[#d2d0ce]">
          <svg width="30" height="31" viewBox="0 0 30 31">
            <path d="M0 1.500h24" stroke={K} strokeWidth="1.500" />
            <path d="M1 8h28v8.500H1zM1 21.500h28v8H1z" fill="#117865" stroke="#111" strokeWidth="1.500" strokeDasharray="2.500 1.500" />
          </svg>
        </div>
        <svg width="31" height="31" viewBox="0 0 31 31" fill="none" stroke="#252423" strokeWidth="1.500" className="ml-[48px] mt-1">
          <path d="M5 30H1V1h12l8 8v4M13 1v9h8M29.500 11.500 17 23l2.500 2.500L30 12zM16 23c-5 0-3 6-9 6 5 2 12 1 12.500-3.500z" />
        </svg>
      </div>
      <svg width="225" height="12" viewBox="0 0 225 12" fill="none" stroke="#8a8886" className="mt-[5px] block"><path d="M0 10.500h20l10-9.500 10 9.500h185" /></svg>
      <div className="ml-[14px] mt-[12px] grid w-[210px] grid-cols-6 gap-y-3">
        {visuals.map((v, i) => <VisIcon key={i} icon={v} />)}
      </div>
      <svg width="20" height="4" className="ml-[16px] mt-[20px] block" fill="#252423"><circle cx="2" cy="2" r="1.100" /><circle cx="9.500" cy="2" r="1.100" /><circle cx="17" cy="2" r="1.100" /></svg>
      <div className="mt-[22px] h-px bg-[#d8d6d4]" />
      <Label w={42} size={15} className="ml-[15px] mt-[10px]">Values</Label>
      <div className="ml-[5px] mt-[6px] flex h-[35px] w-[213px] items-center border border-dashed border-[#c0bebc] bg-white pl-[12px]">
        <Label w={134} size={15} className="-mt-px">Add data fields here</Label>
      </div>
      <Label w={87} size={15} weight={600} fill="#4f4d4b" className="ml-[15px] mt-[12px]">Drill through</Label>
      <div className="mt-[10px] flex items-center justify-between pl-[15px] pr-[27px]">
        <Label w={83} size={15}>Cross-report</Label>
        <div className="flex h-5 w-10 items-center rounded-full border border-[#797775] bg-white pl-[5px]">
          <div className="h-[10px] w-[10px] rounded-full bg-[#605e5c]" />
          <Label w={16} h={18} size={11} fill="#605e5c" className="ml-[2px]">Off</Label>
        </div>
      </div>
      <div className="mt-[12px] flex items-center justify-between pl-[15px] pr-[27px]">
        <Label w={93} size={15} className="-mt-px">Keep all filters</Label>
        <div className="flex h-5 w-10 items-center rounded-full bg-[#117865] pl-[6px]">
          <Label w={14} h={20} size={11} fill="#fff">On</Label>
          <div className="ml-1 h-[10px] w-[10px] rounded-full bg-white" />
        </div>
      </div>
      <div className="ml-[5px] mt-[12px] flex h-8 w-[213px] items-center border border-dashed border-[#c0bebc] bg-white pl-[10px]">
        <Label w={188} size={15} className="mt-px">Add drill-through fields here</Label>
      </div>
    </div>
  );
}

const fields = [
  ['Mea', 'measure', 27], ['Dim', 'table', 26], ['Dim', 'table', 26], ['Dim', 'table', 26], ['Dim', 'table', 26], ['DIM', 'calc', 26],
  ['DIM', 'table', 26], ['DIM', 'table', 26], ['Dim', 'table', 26], ['DIM', 'table', 26], ['FACT', 'table', 33], ['Grow', 'calc', 34],
];

function FieldIcon({ kind }) {
  return (
    <svg width="18" height="18" viewBox="0 0 18 18" fill="none" stroke="#3b3a39" strokeWidth="1.400" className="shrink-0">
      {kind === 'measure' && (
        <>
          <rect x="1" y="1" width="13" height="14" rx="3" />
          <path d="M4 4.500h7M16.500 4v9c0 3-1 4-4 4H5" />
          <path d="M4 8.500h8M4 11.500h8" strokeWidth="1.800" strokeDasharray="1.800 1.200" />
        </>
      )}
      {kind === 'table' && <path d="M3 1h10c1.500 0 2 .5 2 2v10c0 1.500-.5 2-2 2H3c-1.500 0-2-.5-2-2V3c0-1.500.5-2 2-2zM5.500 1v14M10.500 1v14M1 5.500h14M1 10.500h14" />}
      {kind === 'calc' && (
        <>
          <path d="M8 15H3c-1.500 0-2-.5-2-2V3c0-1.500.5-2 2-2h10c1.500 0 2 .5 2 2v2M5.500 1v14M10.500 1v5M1 5.500h14M1 10.500h7" />
          <path d="M9.500 7.500h8v10h-8zM9.500 10.500h8M12.200 10.500v7M14.800 10.500v7M9.500 14h8" strokeWidth="1.200" />
        </>
      )}
    </svg>
  );
}

function DataPane() {
  return (
    <div className="flex w-[86px] shrink-0 flex-col overflow-hidden bg-[#f3f2f1]">
      <Label w={41} size={18.500} weight={600} className="ml-[10px] mt-[14px]">Data</Label>
      <div className="ml-[5px] mt-[22px] flex h-[30px] w-[160px] shrink-0 items-center rounded border border-b-[#797775] border-[#c8c6c4] bg-white pl-[14px]">
        <svg width="18" height="18" viewBox="0 0 18 18" fill="none" stroke="#605e5c" strokeWidth="1.400" className="shrink-0 -mt-1"><circle cx="7" cy="7" r="6" /><path d="m11.500 11.500 6 6" /></svg>
        <Label w={48} size={15.500} fill="#605e5c" className="ml-[9px]">Search</Label>
      </div>
      <div className="mt-[10px] flex flex-col">
        {fields.map(([name, kind, w], i) => (
          <div key={i} className="flex h-[30px] items-center pl-[17px]">
            <Chevron size={13} dir="right" sw={1.200} color="#605e5c" />
            <div className="ml-[6px]"><FieldIcon kind={kind} /></div>
            <Label w={w} size={15} fill="#3b3a39" className="ml-[5px] mt-px">{name}</Label>
          </div>
        ))}
      </div>
    </div>
  );
}

/* ---------- status bar and taskbar ---------- */

function StatusBar() {
  return (
    <div className="flex h-[29px] shrink-0 items-center justify-between border-b-2 border-black bg-[#f3f2f1] pl-[5px]">
      <Label w={74} size={15} fill="#4a4846" className="mt-[6px]">Page 1 of 4</Label>
      <svg width="125" height="16" className="mt-[3px]" stroke="#605e5c">
        <path d="M0 7.500h6" strokeWidth="2" />
        <path d="M12 8.500h113M74.500 5v7" />
        <rect x="62.500" y="2.500" width="4" height="12" fill="#605e5c" />
      </svg>
    </div>
  );
}

function Taskbar() {
  return (
    <footer className="flex h-[30px] shrink-0 items-start overflow-hidden border-t border-[#44494a] bg-linear-to-r from-[#2c1f17] via-[#262521] via-30% to-[#1a2b31]">
      <svg width="34" height="30" viewBox="0 0 34 30" className="ml-6 shrink-0">
        <circle cx="17" cy="29" r="15" fill="#b4532a" />
        <circle cx="17" cy="29" r="11" fill="#e6a817" />
        <circle cx="24.500" cy="18" r="9.500" fill="#f4a08f" />
        <T x={21.500} cy={18.500} w={6.500} size={13} fill="#222">2</T>
      </svg>
      <Label w={31} size={14.500} fill="#fff" className="ml-[6px] mt-[9px]">30°C</Label>
      <svg width="30" height="14" className="ml-[380px] mt-[16px] shrink-0"><path d="M0 0h14v14H0zM15.500 0h14v14h-14z" fill="#4cc2ff" /></svg>
      <div className="ml-[16px] mt-[10px] flex h-[40px] w-[275px] shrink-0 rounded-t-[20px] border border-[#5f6462] bg-linear-to-r from-[#4a3a30] to-[#39413f] pl-[14px]">
        <svg width="18" height="20" viewBox="0 0 18 20" fill="none" stroke="#ddd" strokeWidth="2" className="mt-2.5"><circle cx="9" cy="9" r="7" /></svg>
        <Label w={50} size={16.500} fill="#bbb" className="ml-[13px] mt-[8px]">Search</Label>
      </div>
      <svg width="615" height="30" viewBox="796 1019 615 30" className="shrink-0">
        <path d="M819 1036h22v13h-22z" fill="#f3f3f3" /><path d="M811 1043h16v6h-16z" fill="#8d8f8f" />
        <path d="M866 1038h30v11h-30z" fill="#e8ecef" /><path d="M871 1049l3-7 4 7 5-6 2 6z" fill="#3c9be0" />
        <path d="M932 1037h9c4 0 5 3 6 6h-7c-3 0-3 3-4 6h-12c2-6 3-12 8-12z" fill="#2094c4" /><path d="M941 1043h6c4 0 4 3 3 6h-12z" fill="#b55cd6" />
        <circle cx="993" cy="1042" r="4" fill="#7b83eb" /><circle cx="1001" cy="1043" r="3" fill="#5059c9" />
        <path d="M978 1043h15v6h-15z" fill="#f3f3f3" /><path d="M993 1047h11v2h-11z" fill="#5059c9" />
        <path d="M982 1045.500h7M985.500 1045.500v4" stroke="#3b62c4" strokeWidth="1.500" />
        <circle cx="1046.500" cy="1050" r="15" fill="#1f8fd6" /><path d="M1046 1035c9 0 15 6 15.500 14H1050c0-6-5-9-16-6 2-5 7-8 12-8z" fill="#41c7b2" />
        <path d="M1086 1037h10l3 3h18v9h-31z" fill="#f7b93e" /><path d="M1086 1042h31v7h-31z" fill="#fbd070" />
        <circle cx="1156.500" cy="1049" r="13" fill="#3aa0dc" /><path d="m1148 1049 14-6-2 6z" fill="#fff" />
        <path d="M1197 1047l14-11 15 11v2h-29z" fill="#1b5fb4" /><path d="M1200 1046h24v3h-24z" fill="#e8f3fc" />
        <circle cx="1266" cy="1052" r="13" fill="none" stroke="#3cb864" strokeWidth="3" /><path d="M1261 1046l4 3h-5z" fill="#3cb864" />
        <circle cx="1277" cy="1038.500" r="12.500" fill="#4cb8f5" />
        <T x={1269.500} cy={1039} w={15} size={14} fill="#10222c">54</T>
        <path d="M1322 1035h11v14h-11z" fill="#e8a91c" /><path d="M1314 1042h11v7h-11z" fill="#f6c65a" />
        <rect x="1352" y="1026" width="50" height="30" rx="5" fill="#33434a" />
        <path d="M1376 1035h11v14h-11z" fill="#e8a91c" /><path d="M1368 1042h11v7h-11z" fill="#f6c65a" />
      </svg>
      <svg width="220" height="12" viewBox="1560 1037 220 12" className="ml-auto mt-[18px] shrink-0" fill="none" stroke="#fff" strokeWidth="1.600">
        <path d="m1567 1050 4-4 4 4M1604 1041c5-4 10-4 14 0M1606 1045c4-3 7-3 10 0M1609 1049h5" />
        <path d="M1696 1043c6-6 14-6 20 0M1700 1046c4-4 9-4 13 0M1703 1049h7M1727 1045h3l5-4v8M1738 1043c2 2 2 4 2 6M1742 1040c3 3 3 6 3 9M1757 1042l-2 5h5M1763 1042h9v7" />
      </svg>
    </footer>
  );
}

function Watermark() {
  return (
    <svg width="216" height="110" viewBox="782 922 216 110" className="pointer-events-none absolute left-[782px] top-[922px] opacity-45">
      <g transform="translate(0 976) scale(1 1.12)">
        <text x="890" y="0" textAnchor="middle" direction="rtl" fontSize="66" textLength="213" lengthAdjust="spacingAndGlyphs" fontFamily='"DejaVu Sans", sans-serif' fontWeight="700" fill="#c8c8c8" stroke="#c8c8c8" strokeWidth="2">مستقل</text>
      </g>
      <text x="783" y="1020" fontSize="31" textLength="214" lengthAdjust="spacingAndGlyphs" fontFamily='"Liberation Sans", sans-serif' fontWeight="700" fill="#c8c8c8">mostaql.com</text>
    </svg>
  );
}

export default function App() {
  return (
    <div className="relative flex h-[1049px] w-[1780px] flex-col overflow-hidden bg-[#f3f2f1]">
      <TitleBar />
      <Ribbon />
      <div className="flex h-[852px] shrink-0">
        <LeftRail />
        <div className="flex w-[1418px] shrink-0 flex-col">
          <div className="flex">
            <ReportCanvas />
            <FiltersPane />
          </div>
          <PageTabs />
        </div>
        <VisualizationsPane />
        <DataPane />
      </div>
      <StatusBar />
      <Taskbar />
      <Watermark />
    </div>
  );
}
